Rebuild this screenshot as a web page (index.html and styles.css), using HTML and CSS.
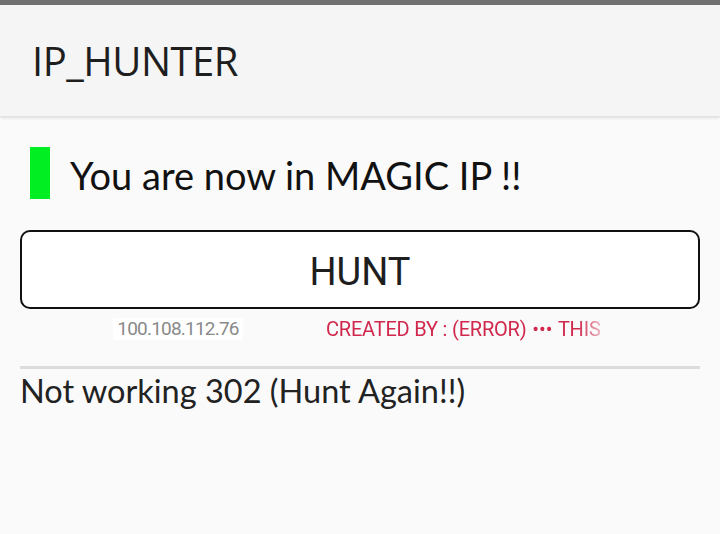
FILE: index.html
```html
<!DOCTYPE html>
<html lang="en">
<head>
  <meta charset="UTF-8">
  <meta name="viewport" content="width=device-width, initial-scale=1.0">
  <title>IP_HUNTER</title>
  <link rel="stylesheet" href="styles.css">
</head>
<body>
  <div class="status-strip"></div>
  <header class="app-bar">
    <h1>IP_HUNTER</h1>
  </header>

  <main class="content">
    <div class="state">
      <span class="state-led"></span>
      <span class="state-text">You are now in MAGIC IP !!</span>
    </div>

    <button class="hunt-btn">HUNT</button>

    <div class="info-row">
      <span class="ip">100.108.112.76</span>
      <div class="marquee">
        <span>CREATED BY : (ERROR) <b class="dots">&bull;&bull;&bull;</b> THIS</span>
      </div>
    </div>

    <hr class="divider">

    <p class="result">Not working 302 (Hunt Again!!)</p>
  </main>
</body>
</html>
```

FILE: styles.css
```css
body {
  margin: 0;
  background: #fafafa;
  font-family: "Noto Sans", sans-serif;
  color: #1c1c1c;
}
.status-strip {
  height: 5px;
  background: #707070;
}
.app-bar {
  height: 111px;
  background: #f5f5f5;
  box-shadow: 0 2px 3px rgba(0, 0, 0, 0.12);
  display: flex;
  align-items: center;
  padding-left: 32px;
}
.app-bar h1 {
  margin: 0;
  font-family: "Open Sans", sans-serif;
  font-weight: 400;
  font-size: 40px;
  letter-spacing: -0.5px;
  color: #1e1e1e;
}
.content {
  padding: 31px 20px 0 20px;
}
.state {
  display: flex;
  align-items: center;
  gap: 20px;
  padding-left: 10px;
}
.state-led {
  width: 20px;
  height: 52px;
  background: #00ee22;
}
.state-text {
  font-family: "Lato", sans-serif;
  font-size: 38px;
  color: #111;
  position: relative;
  top: 2px;
}
.hunt-btn {
  display: block;
  width: 100%;
  height: 79px;
  margin-top: 31px;
  border: 2px solid #111;
  border-radius: 10px;
  background: #fff;
  font-family: Roboto, sans-serif;
  font-size: 38px;
  color: #1e1e1e;
  padding: 4px 0 0 0;
}
.info-row {
  display: flex;
  align-items: center;
  height: 24px;
  margin-top: 8px;
}
.ip {
  margin-left: 93px;
  width: 130px;
  height: 22px;
  background: #fff;
  font-family: Roboto, sans-serif;
  font-size: 19px;
  line-height: 22px;
  color: #8a8a8a;
  text-align: center;
  letter-spacing: -0.8px;
}
.marquee {
  margin-left: 83px;
  width: 286px;
  white-space: nowrap;
  -webkit-mask-image: linear-gradient(to right, #000 88%, transparent 100%);
  mask-image: linear-gradient(to right, #000 88%, transparent 100%);
}
.marquee span {
  font-family: Roboto, sans-serif;
  font-size: 20px;
  color: #d0284c;
  letter-spacing: -0.2px;
}
.marquee .dots {
  font-weight: 400;
  font-size: 20px;
  letter-spacing: 0;
  margin: 0 1px;
}
.divider {
  border: none;
  height: 3px;
  background: #dcdcdc;
  margin: 25px 0 0 0;
}
.result {
  margin: 2px 0 0 0;
  font-family: "Lato", sans-serif;
  font-size: 32.5px;
  color: #222;
}
```
